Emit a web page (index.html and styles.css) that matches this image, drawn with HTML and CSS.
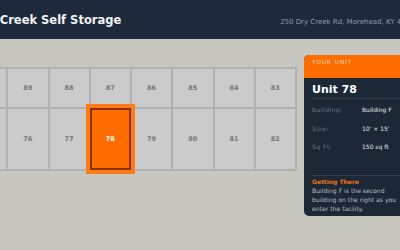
FILE: index.html
```html
<!DOCTYPE html>
<html>
<head>
<meta charset="utf-8">
<link rel="stylesheet" href="styles.css">
</head>
<body>
<div class="page">
  <header class="topbar">
    <h1 class="title">Dry Creek Self Storage</h1>
    <span class="address">250 Dry Creek Rd, Morehead, KY 40351</span>
  </header>
  <main class="main">
    <div class="units">
      <div class="unit">90</div>
      <div class="unit">89</div>
      <div class="unit">88</div>
      <div class="unit">87</div>
      <div class="unit">86</div>
      <div class="unit">85</div>
      <div class="unit">84</div>
      <div class="unit">83</div>
      <div class="unit">75</div>
      <div class="unit">76</div>
      <div class="unit">77</div>
      <div class="unit selected">78</div>
      <div class="unit">79</div>
      <div class="unit">80</div>
      <div class="unit">81</div>
      <div class="unit">82</div>
    </div>
    <aside class="panel">
      <div class="panel-head">YOUR UNIT</div>
      <div class="panel-body">
        <div class="unit-name">Unit 78</div>
        <dl class="facts">
          <dt>Building:</dt><dd>Building F</dd>
          <dt>Size:</dt><dd>10' × 15'</dd>
          <dt>Sq Ft:</dt><dd>150 sq ft</dd>
        </dl>
        <div class="directions">
          <div class="dir-title">Getting There</div>
          <p class="dir-text">Building F is the second building on the right as you enter the facility.</p>
        </div>
      </div>
    </aside>
  </main>
</div>
</body>
</html>
```
FILE: styles.css
```css
html, body {
  margin: 0;
  padding: 0;
}
body {
  width: 400px;
  height: 250px;
  overflow: hidden;
  background: #c8c7bf;
  font-family: "DejaVu Sans", sans-serif;
  display: flex;
  justify-content: center;
}
.page {
  flex: 0 0 470px;
  width: 470px;
}
.topbar {
  height: 39px;
  box-sizing: border-box;
  background: #1c2a3b;
  display: flex;
  align-items: baseline;
  justify-content: space-between;
  padding: 14px 16px 0 8px;
}
.title {
  margin: 0;
  font-size: 11.5px;
  font-weight: bold;
  color: #f2f2f2;
  line-height: 13px;
}
.address {
  font-size: 7px;
  color: #8e9aa8;
}
.main {
  display: flex;
  align-items: flex-start;
  gap: 7px;
  padding: 16px 20px 0 0;
}
.units {
  flex: 1;
  margin-top: 12px;
  display: grid;
  grid-template-columns: repeat(8, 1fr);
  grid-template-rows: 38px 60px;
  gap: 2px;
  padding: 2px;
  background: #b1b1b1;
}
.unit {
  background: #cbcbcb;
  color: #767676;
  font-size: 6.5px;
  font-weight: bold;
  display: flex;
  align-items: center;
  justify-content: center;
}
.unit.selected {
  position: relative;
  z-index: 1;
  margin: -1px;
  background: #ff6c00;
  color: #ffffff;
  border: 2px solid #8a3200;
  box-shadow: 0 0 0 4px #ff7a18;
}
.panel {
  flex: 0 0 111px;
  width: 111px;
  background: #1c2836;
  border-radius: 5px;
  overflow: hidden;
}
.panel-head {
  background: #ff6d00;
  color: #ffd3ad;
  font-size: 6px;
  letter-spacing: 0.8px;
  line-height: 9px;
  padding: 2px 8px 12px;
}
.panel-body {
  padding: 0 8px 3px;
}
.unit-name {
  font-size: 11px;
  font-weight: bold;
  color: #ffffff;
  line-height: 13px;
  padding: 5px 0 2px;
  border-bottom: 1px solid #323f4d;
}
.facts {
  margin: 2px 0 18px;
  display: grid;
  grid-template-columns: 50px 1fr;
  line-height: 18.5px;
  font-size: 6px;
}
.facts dt {
  color: #6c7988;
  letter-spacing: 0.5px;
}
.facts dd {
  margin: 0;
  color: #e8e8e8;
}
.directions {
  border-top: 1px solid #323f4d;
  padding-top: 1px;
}
.dir-title {
  font-size: 6px;
  font-weight: bold;
  color: #ea7417;
  line-height: 9px;
}
.dir-text {
  margin: 0;
  font-size: 6.1px;
  line-height: 9px;
  color: #b7bfc8;
}
```
